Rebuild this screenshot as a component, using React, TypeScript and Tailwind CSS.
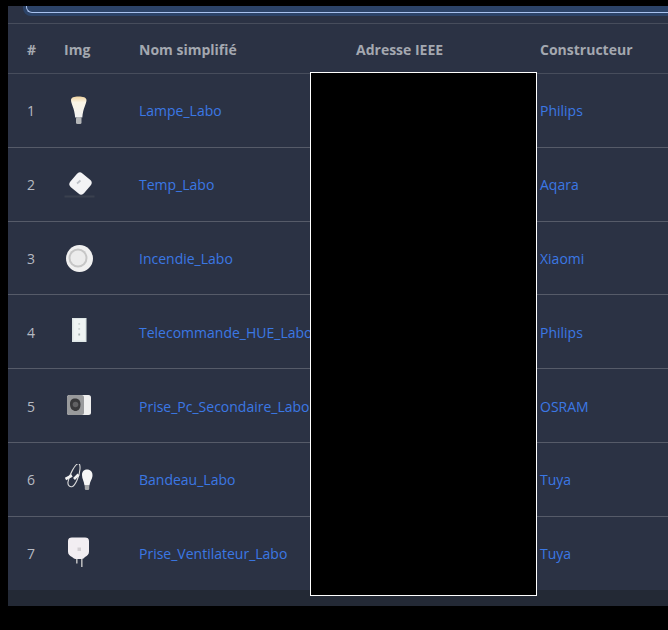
const devices = [
  { id: 1, name: "Lampe_Labo", maker: "Philips", icon: <BulbIcon />, row: "h-[74px]", text: "pt-px" },
  { id: 2, name: "Temp_Labo", maker: "Aqara", icon: <SensorIcon />, row: "h-[74px]", text: "" },
  { id: 3, name: "Incendie_Labo", maker: "Xiaomi", icon: <SmokeIcon />, row: "h-[73px]", text: "pt-px" },
  { id: 4, name: "Telecommande_HUE_Labo", maker: "Philips", icon: <RemoteIcon />, row: "h-[74px]", text: "pt-0.5" },
  { id: 5, name: "Prise_Pc_Secondaire_Labo", maker: "OSRAM", icon: <SocketIcon />, row: "h-[74px]", text: "pt-0.5" },
  { id: 6, name: "Bandeau_Labo", maker: "Tuya", icon: <StripIcon />, row: "h-[74px]", text: "" },
  { id: 7, name: "Prise_Ventilateur_Labo", maker: "Tuya", icon: <PlugIcon />, row: "h-[74px]", text: "" },
];

function BulbIcon() {
  return (
    <svg width="30" height="30" viewBox="0 0 30 30">
      <defs>
        <linearGradient id="bulb" x1="0" y1="0" x2="0" y2="1">
          <stop offset="0" stopColor="#efd3a0" />
          <stop offset="0.28" stopColor="#fbf5e6" />
          <stop offset="1" stopColor="#f2f2f2" />
        </linearGradient>
      </defs>
      <path d="M7 5C7 2.600 10 1.500 14.500 1.500S22.500 2.600 22.500 5C22.500 9 19 13 18.300 22.500H11.200C10.500 13 7 9 7 5Z" fill="url(#bulb)" />
      <rect x="12" y="22" width="5.500" height="7" rx="1.500" fill="#b4b6b8" />
    </svg>
  );
}

function SensorIcon() {
  return (
    <svg width="32" height="32" viewBox="0 0 32 32">
      <rect x="0.500" y="27.500" width="30" height="2" fill="#3a404e" />
      <rect x="7.500" y="6.500" width="18" height="18" rx="4" transform="rotate(40 16.500 15.500)" fill="#f3f3f5" />
      <path d="M13 15.500 16.500 12.500" stroke="#bcc0c6" strokeWidth="1.800" />
    </svg>
  );
}

function SmokeIcon() {
  return (
    <svg width="30" height="30" viewBox="0 0 30 30">
      <circle cx="15.500" cy="15.500" r="13.500" fill="#f0f0f0" />
      <circle cx="14" cy="15" r="9.500" fill="#c6c6c6" />
      <circle cx="14" cy="15" r="7.500" fill="#ececec" />
    </svg>
  );
}

function RemoteIcon() {
  return (
    <svg width="30" height="30" viewBox="0 0 30 30">
      <rect x="8" y="2" width="14.500" height="24" fill="#dfe7e7" />
      <rect x="9.500" y="3" width="11.500" height="21.500" fill="#eff4f4" />
      <rect x="14.300" y="7" width="1.800" height="1.800" fill="#ced5d5" />
      <rect x="14.300" y="12" width="1.800" height="1.800" fill="#ced5d5" />
      <rect x="14.300" y="17.500" width="1.800" height="2" fill="#a9b2b2" />
    </svg>
  );
}

function SocketIcon() {
  return (
    <svg width="30" height="30" viewBox="0 0 30 30">
      <rect x="3" y="5" width="24" height="20" rx="2.500" fill="#efefef" />
      <rect x="3" y="5" width="17" height="20" rx="2.500" fill="#999a9c" />
      <path d="M6 14C6 10 8 8.500 11 8.500S16.500 10 16.500 14.500C16.500 19 14 21 11.500 21S6 19 6 14Z" fill="#39393b" />
      <circle cx="11.500" cy="14.500" r="2.800" fill="#616163" />
    </svg>
  );
}

function StripIcon() {
  return (
    <svg width="32" height="30" viewBox="0 0 32 30">
      <path d="M14.500 -0.500C11.500 -0.500 5 11 4 18C3.500 21.500 6 23.500 8.500 22.500C11 21 15.500 13 16 5C16.200 1.500 15.500 -0.500 14.500 -0.500Z" fill="none" stroke="#dedede" strokeWidth="1.100" />
      <path d="M1.500 15 8 11.500M10 15 14.500 10.500" stroke="#f2f2f2" strokeWidth="2.600" />
      <path d="M18 11C18 7 20.500 5.500 23 5.500S28.500 7 28.500 11C28.500 15 26 17 25.500 21.500H20.500C20 17 18 15 18 11Z" fill="#f6f6f6" />
      <rect x="20.800" y="21" width="4.400" height="5" rx="1.200" fill="#a5a7a9" />
    </svg>
  );
}

function PlugIcon() {
  return (
    <svg width="30" height="32" viewBox="0 0 30 32">
      <path d="M4 4C4 1.500 5.500 0.500 8 0.500H21C23.500 0.500 25 1.500 25 4V14.500C25 17.500 23.500 18.500 21 20C20 21 19 22 18 22H11.500C10.500 22 9.500 21 8 20C5.500 18.500 4 17.500 4 14.500Z" fill="#f2eef2" />
      <rect x="12" y="22" width="1.600" height="4.500" fill="#b5b6b8" />
      <rect x="17" y="22" width="1.600" height="8" fill="#b5b6b8" />
      <rect x="13.500" y="10.500" width="3.500" height="3.500" fill="#d3cfd3" />
    </svg>
  );
}

export default function App() {
  return (
    <div className="relative h-[630px] w-[668px] overflow-hidden bg-black font-['Open_Sans','Liberation_Sans',sans-serif]">
      <div className="ml-2 mt-1.5 h-[600px] bg-[#2b3244]">
        <div className="h-[18px] border-b border-[#474d5c]">
          <div className="ml-[15px] h-2.5 rounded-bl-lg bg-[#2c4368] pb-[3px] pl-[3px]">
            <div className="h-[7px] rounded-bl-md border-b border-l border-[#a9c2ee]" />
          </div>
        </div>
        <table className="w-full table-fixed border-collapse text-[14px]">
          <colgroup>
            <col className="w-[44px]" />
            <col className="w-[75px]" />
            <col className="w-[217px]" />
            <col className="w-[184px]" />
            <col />
          </colgroup>
          <thead>
            <tr className="h-[49px] border-b border-[#474d5c] text-left font-bold text-[#a4a8b0]">
              <th className="pl-[19px] pt-0.5">#</th>
              <th className="pl-3 pt-0.5">Img</th>
              <th className="pl-3 pt-0.5">Nom simplifié</th>
              <th className="pl-3 pt-0.5">Adresse IEEE</th>
              <th className="pl-3 pt-0.5">Constructeur</th>
            </tr>
          </thead>
          <tbody>
            {devices.map((device, index) => (
              <tr
                key={device.id}
                className={`${device.row} ${index < devices.length - 1 ? "border-b border-[#565b69]" : ""}`}
              >
                <td className={`pl-[19px] text-[#b6bac2] ${device.text}`}>{device.id}</td>
                <td className="pl-3">
                  <div className="flex">{device.icon}</div>
                </td>
                <td className={`overflow-hidden whitespace-nowrap pl-3 text-[#3b78e4] ${device.text}`}>{device.name}</td>
                <td />
                <td className={`pl-3 text-[#3b78e4] ${device.text}`}>{device.maker}</td>
              </tr>
            ))}
          </tbody>
        </table>
        <div className="h-4 bg-[#232935]" />
      </div>
      <div className="absolute left-[310px] top-[72px] h-[524px] w-[227px] border border-white bg-black" />
    </div>
  );
}
